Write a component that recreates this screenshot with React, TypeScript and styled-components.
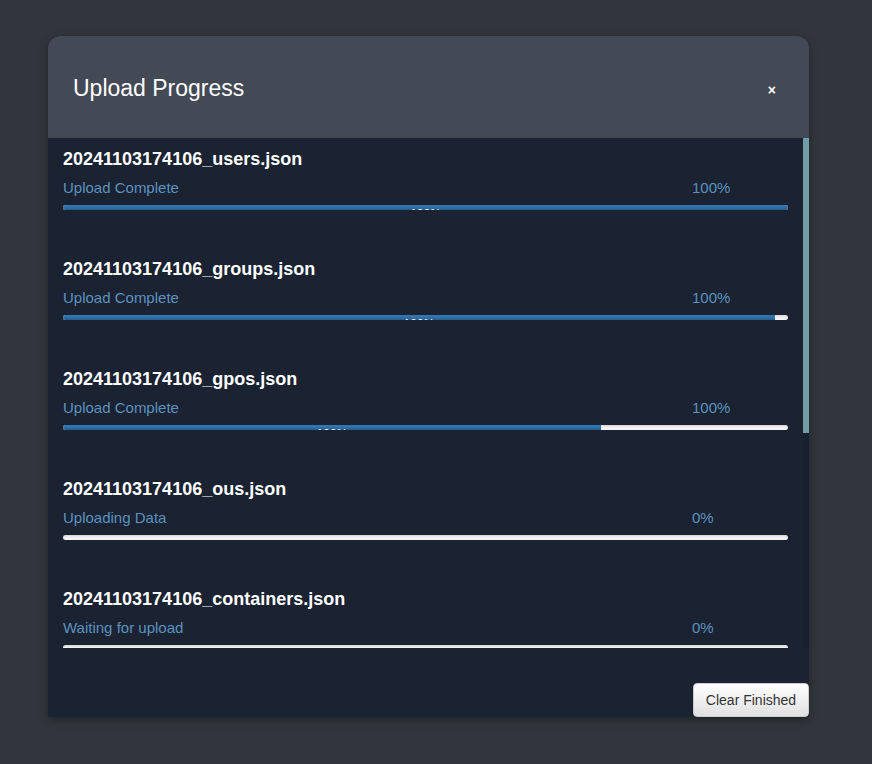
import React from "react";
import styled, { createGlobalStyle } from "styled-components";

const Global = createGlobalStyle`
  html, body {
    margin: 0;
    padding: 0;
    background: #31363e;
    font-family: "Liberation Sans", Arial, sans-serif;
  }
`;

const Page = styled.div`
  padding: 36px 0 0 48px;
  height: 764px;
  box-sizing: border-box;
`;

const Modal = styled.div`
  width: 761px;
  border-radius: 12px 12px 0 0;
  background: #1b2231;
  box-shadow: 0 3px 9px rgba(0, 0, 0, 0.35);
  display: flex;
  flex-direction: column;
`;

const Header = styled.div`
  height: 102px;
  background: #434955;
  border-radius: 12px 12px 0 0;
  display: flex;
  align-items: center;
  justify-content: space-between;
  padding: 0 33px 0 25px;
  box-sizing: border-box;
`;

const Title = styled.h4`
  margin: 4px 0 0 0;
  font-size: 23px;
  font-weight: normal;
  color: #ffffff;
  line-height: 1.1;
`;

const Close = styled.button`
  background: transparent;
  border: 0;
  padding: 0;
  margin-top: 6px;
  color: #ffffff;
  font-family: "Liberation Sans", Arial, sans-serif;
  font-size: 14px;
  font-weight: bold;
  line-height: 1;
  cursor: pointer;
`;

const Body = styled.div`
  height: 510px;
  display: flex;
`;

const List = styled.div`
  flex: 1;
  overflow: hidden;
  padding: 0 15px;
`;

const Rail = styled.div`
  width: 6px;
  background: #182030;
`;

const Thumb = styled.div`
  height: 295px;
  background: #6f9ea5;
`;

const Item = styled.div`
  padding: 10px 0 38px;
`;

const FileName = styled.div`
  font-size: 18px;
  font-weight: bold;
  line-height: 22px;
  color: #ffffff;
`;

const StatusRow = styled.div`
  display: grid;
  grid-template-columns: 1fr 96px;
  margin-top: 8px;
  font-size: 15px;
  line-height: 20px;
  color: #5a93c0;
`;

const Track = styled.div`
  margin-top: 7px;
  height: 5px;
  border-radius: 3px;
  overflow: hidden;
  background: linear-gradient(to bottom, #ebebeb, #f5f5f5);
  box-shadow: inset 0 1px 2px rgba(0, 0, 0, 0.1);
`;

const Fill = styled.div`
  height: 100%;
  background: linear-gradient(to bottom, #337ab7 0%, #2e6da4 60%, #265a88 100%);
  color: #ffffff;
  font-size: 12px;
  line-height: 18px;
  text-align: center;
  white-space: nowrap;
  overflow: hidden;
`;

const Footer = styled.div`
  height: 69px;
  display: flex;
  justify-content: flex-end;
  align-items: flex-end;
`;

const ClearButton = styled.button`
  width: 116px;
  height: 34px;
  border: 1px solid #cccccc;
  border-radius: 4px;
  background: linear-gradient(to bottom, #ffffff 0%, #e0e0e0 100%);
  color: #333333;
  font-family: "Liberation Sans", Arial, sans-serif;
  font-size: 14px;
  box-shadow: inset 0 1px 0 rgba(255, 255, 255, 0.15), 0 1px 1px rgba(0, 0, 0, 0.075);
  cursor: pointer;
`;

type Upload = { name: string; status: string; pct: string; fill: number; label: string };

const uploads: Upload[] = [
  { name: "20241103174106_users.json", status: "Upload Complete", pct: "100%", fill: 100, label: "100%" },
  { name: "20241103174106_groups.json", status: "Upload Complete", pct: "100%", fill: 98.2, label: "100%" },
  { name: "20241103174106_gpos.json", status: "Upload Complete", pct: "100%", fill: 74.2, label: "100%" },
  { name: "20241103174106_ous.json", status: "Uploading Data", pct: "0%", fill: 0, label: "0%" },
  { name: "20241103174106_containers.json", status: "Waiting for upload", pct: "0%", fill: 0, label: "0%" },
  { name: "20241103174106_computers.json", status: "Waiting for upload", pct: "0%", fill: 0, label: "0%" },
  { name: "20241103174106_domains.json", status: "Waiting for upload", pct: "0%", fill: 0, label: "0%" },
  { name: "20241103174106_certtemplates.json", status: "Waiting for upload", pct: "0%", fill: 0, label: "0%" },
];

export default function App() {
  return (
    <>
      <Global />
      <Page>
        <Modal>
          <Header>
            <Title>Upload Progress</Title>
            <Close aria-label="Close">×</Close>
          </Header>
          <Body>
            <List>
              {uploads.map((u) => (
                <Item key={u.name}>
                  <FileName>{u.name}</FileName>
                  <StatusRow>
                    <span>{u.status}</span>
                    <span>{u.pct}</span>
                  </StatusRow>
                  <Track>
                    <Fill style={{ width: `${u.fill}%` }}>{u.fill > 0 ? u.label : ""}</Fill>
                  </Track>
                </Item>
              ))}
            </List>
            <Rail>
              <Thumb />
            </Rail>
          </Body>
          <Footer>
            <ClearButton>Clear Finished</ClearButton>
          </Footer>
        </Modal>
      </Page>
    </>
  );
}
